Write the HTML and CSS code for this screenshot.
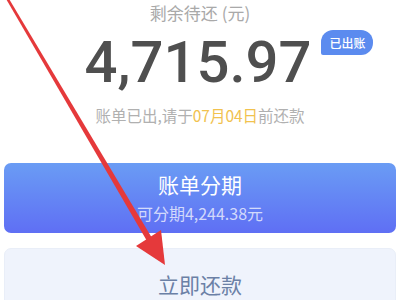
FILE: index.html
```html
<!DOCTYPE html>
<html lang="zh-CN">
<head>
<meta charset="utf-8">
<link rel="stylesheet" href="styles.css">
</head>
<body>
<div class="page">
  <div class="title">剩余待还 (元)</div>
  <div class="amount-row">
    <div class="amount">4,715.97<span class="badge">已出账</span></div>
  </div>
  <div class="due">账单已出,请于<span class="date">07月04日</span>前还款</div>
  <div class="btn btn-primary">
    <div class="btn-main">账单分期</div>
    <div class="btn-sub">可分期4,244.38元</div>
  </div>
  <div class="btn btn-light">
    <div class="btn-main">立即还款</div>
  </div>
  <svg class="arrow" width="400" height="300" viewBox="0 0 400 300">
    <polygon points="5.5,-2 8.5,-2 152,238 147,241" fill="#e5393b"/>
    <polygon points="136,246 161,230 165,265" fill="#e5393b"/>
  </svg>
</div>
</body>
</html>
```

FILE: styles.css
```css
html, body {
  margin: 0;
  padding: 0;
  background: #ffffff;
}
.page {
  position: relative;
  width: 400px;
  height: 300px;
  overflow: hidden;
  padding: 0 4px;
  box-sizing: border-box;
  font-family: "Noto Sans CJK SC", "Noto Sans", sans-serif;
}
.title {
  height: 25px;
  line-height: 25px;
  text-align: center;
  font-size: 17px;
  color: #a9a9a9;
}
.amount-row {
  margin-top: 3px;
  display: flex;
  justify-content: center;
  padding-right: 4px;
}
.amount {
  position: relative;
  font-family: Roboto, "Liberation Sans", sans-serif;
  font-size: 58px;
  font-weight: 500;
  line-height: 68px;
  height: 68px;
  color: #4f4f4f;
}
.badge {
  position: absolute;
  left: calc(100% + 10px);
  top: 2px;
  width: 52px;
  height: 25px;
  line-height: 25px;
  text-align: center;
  background: #5b8bef;
  color: #ffffff;
  font-family: "Noto Sans CJK SC", sans-serif;
  font-size: 12px;
  font-weight: 500;
  border-radius: 12px 12px 12px 2px;
}
.due {
  margin-top: 7px;
  line-height: 24px;
  text-align: center;
  font-size: 15.5px;
  color: #b0b0b0;
}
.date {
  color: #f1c24f;
}
.btn {
  border-radius: 7px;
  height: 70px;
  box-sizing: border-box;
  display: flex;
  flex-direction: column;
  align-items: center;
}
.btn-primary {
  margin-top: 36px;
  padding-top: 7px;
  gap: 4px;
  background: linear-gradient(180deg, #6a9cf4 0%, #5f6ff4 100%);
}
.btn-primary .btn-main {
  font-size: 21px;
  line-height: 28px;
  color: #ffffff;
}
.btn-sub {
  font-size: 16px;
  line-height: 22px;
  color: rgba(255, 255, 255, 0.72);
}
.btn-light {
  margin-top: 15px;
  height: 72px;
  justify-content: center;
  background: #eff3fc;
  border: 1px solid #e9eef8;
}
.btn-light .btn-main {
  font-size: 21px;
  line-height: 28px;
  color: #6b80a6;
}
.arrow {
  position: absolute;
  left: 0;
  top: 0;
  pointer-events: none;
}
```
